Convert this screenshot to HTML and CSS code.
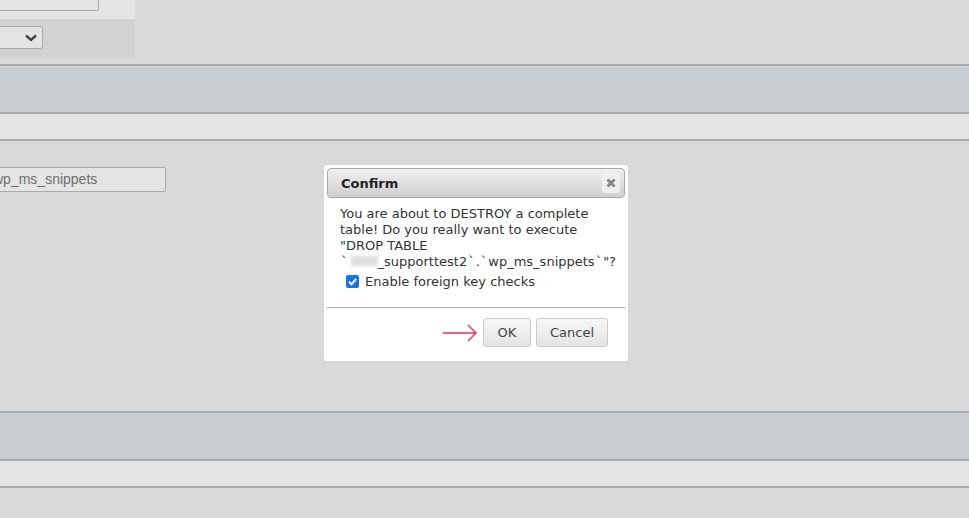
FILE: index.html
```html
<!DOCTYPE html>
<html lang="en">
<head>
    <meta charset="UTF-8">
    <title>Drop table</title>
    <link rel="stylesheet" href="styles.css">
</head>
<body>
    <div class="top-panel">
        <div class="top-row"><div class="top-input"></div></div>
        <div class="top-row2">
            <div class="fake-select">
                <svg width="12" height="8" viewBox="0 0 12 8"><path d="M1 1.5 L6 6 L11 1.5" fill="none" stroke="#444" stroke-width="2.4"/></svg>
            </div>
        </div>
    </div>

    <div class="band band-blue first-band"></div>
    <div class="band band-light"></div>

    <div class="middle">
        <div class="name-input">wp_ms_snippets</div>
    </div>

    <div class="band band-blue"></div>
    <div class="band band-light"></div>

    <!-- Confirm dialog -->
    <div class="dialog">
        <div class="titlebar">
            <span class="title">Confirm</span>
            <span class="close">
                <svg width="12" height="12" viewBox="0 0 12 12"><path d="M2.5 2.5 L9.5 9.5 M9.5 2.5 L2.5 9.5" stroke="#888" stroke-width="3"/></svg>
            </span>
        </div>
        <div class="dialog-body">
            <p class="msg">You are about to DESTROY a complete table! Do you really want to execute "DROP TABLE <span class="nowrap"><span class="tick">`</span><span class="blur"></span>_supporttest2<span class="tick">`</span>.<span class="tick">`</span>wp_ms_snippets<span class="tick">`</span>"?</span></p>
            <label class="check">
                <span class="box">
                    <svg width="13" height="13" viewBox="0 0 13 13"><path d="M3 6.8 L5.5 9.2 L10.2 3.8" fill="none" stroke="#fff" stroke-width="2"/></svg>
                </span>
                Enable foreign key checks
            </label>
        </div>
        <div class="buttons">
            <svg class="arrow" width="36" height="20" viewBox="0 0 36 20"><path d="M1 10 H34 M26 2 L34 10 L26 18" fill="none" stroke="#e8325a" stroke-width="1.4"/></svg>
            <button class="btn ok">OK</button>
            <button class="btn cancel">Cancel</button>
        </div>
    </div>
</body>
</html>
```

FILE: styles.css
```css
body {
    margin: 0;
    background: #dadada;
    font-family: "DejaVu Sans", Verdana, sans-serif;
    height: 518px;
    overflow: hidden;
    position: relative;
}

/* Background page behind the overlay */
.top-panel {
    width: 135px;
    height: 58px;
    display: flex;
    flex-direction: column;
}

.top-row {
    height: 19px;
    background: #e4e4e4;
}

.top-input {
    width: 98px;
    height: 10px;
    border: 1px solid #aaa;
    border-top: none;
    border-left: none;
    border-radius: 0 0 2px 0;
    background: #e4e4e4;
}

.top-row2 {
    flex: 1;
    background: #d2d2d2;
    padding-top: 7px;
}

.fake-select {
    width: 43px;
    height: 23px;
    border: 1px solid #aaa;
    border-left: none;
    border-radius: 0 3px 3px 0;
    background: #e4e4e4;
    display: flex;
    align-items: center;
    justify-content: flex-end;
    padding-right: 5px;
    box-sizing: border-box;
}

.band {
    border-top: 2px solid #a9a9a9;
}

.band-blue {
    height: 46px;
    background: #c8cdd1;
    box-shadow: inset 0 1px 0 #d0d5d9;
}

.first-band {
    margin-top: 6px;
}

.band-light {
    height: 25px;
    background: #e4e4e4;
    border-bottom: 2px solid #a9a9a9;
}

.middle {
    height: 270px;
    padding-top: 26px;
    box-sizing: border-box;
}

.name-input {
    width: 165px;
    height: 23px;
    border: 1px solid #aaa;
    border-left: none;
    border-radius: 0 2px 2px 0;
    background: #e4e4e4;
    color: #6e6e6e;
    font-family: "Liberation Sans", Arial, sans-serif;
    font-size: 14px;
    line-height: 23px;
    text-indent: -7px;
    overflow: hidden;
    white-space: nowrap;
}

/* Dialog */
.dialog {
    position: absolute;
    left: 323px;
    top: 164px;
    width: 306px;
    height: 198px;
    box-sizing: border-box;
    background: #fff;
    border: 1px solid #d8d8d8;
    border-radius: 4px;
    padding: 3px;
}

.titlebar {
    height: 30px;
    border: 1px solid #a9a9a9;
    border-radius: 4px;
    background: linear-gradient(#f0f0f0, #cfcfcf);
    display: flex;
    align-items: center;
    justify-content: space-between;
    padding: 0 4px 0 13px;
    box-sizing: border-box;
}

.title {
    font-weight: bold;
    font-size: 13px;
    color: #222;
}

.close {
    width: 18px;
    height: 20px;
    background: #efefef;
    border-radius: 2px;
    display: flex;
    align-items: center;
    justify-content: center;
}

.dialog-body {
    padding: 8px 2px 0 13px;
    height: 110px;
    box-sizing: border-box;
    border-bottom: 1px solid #aaa;
}

.msg {
    margin: 0;
    font-size: 13px;
    line-height: 16px;
    color: #333;
}

.nowrap {
    white-space: nowrap;
}

.tick {
    padding: 0 1px;
}

.blur {
    display: inline-block;
    width: 27px;
    height: 10px;
    margin-left: 2px;
    background: #dedede;
    filter: blur(1.5px);
}

.check {
    display: flex;
    align-items: center;
    gap: 6px;
    margin: 4px 0 0 6px;
    font-size: 13px;
    color: #333;
}

.box {
    width: 13px;
    height: 13px;
    border-radius: 2px;
    background: #1a73e8;
    display: flex;
}

.buttons {
    display: flex;
    justify-content: flex-end;
    align-items: center;
    gap: 5px;
    padding: 10px 17px 0 0;
}

.arrow {
    margin-right: 0;
}

.btn {
    height: 29px;
    padding: 0;
    border: 1px solid #ccc;
    border-radius: 3px;
    background: linear-gradient(#f7f7f7, #e4e4e4);
    color: #444;
    font-family: "DejaVu Sans", Verdana, sans-serif;
    font-size: 13px;
}

.ok {
    width: 48px;
}

.cancel {
    width: 72px;
}
```
